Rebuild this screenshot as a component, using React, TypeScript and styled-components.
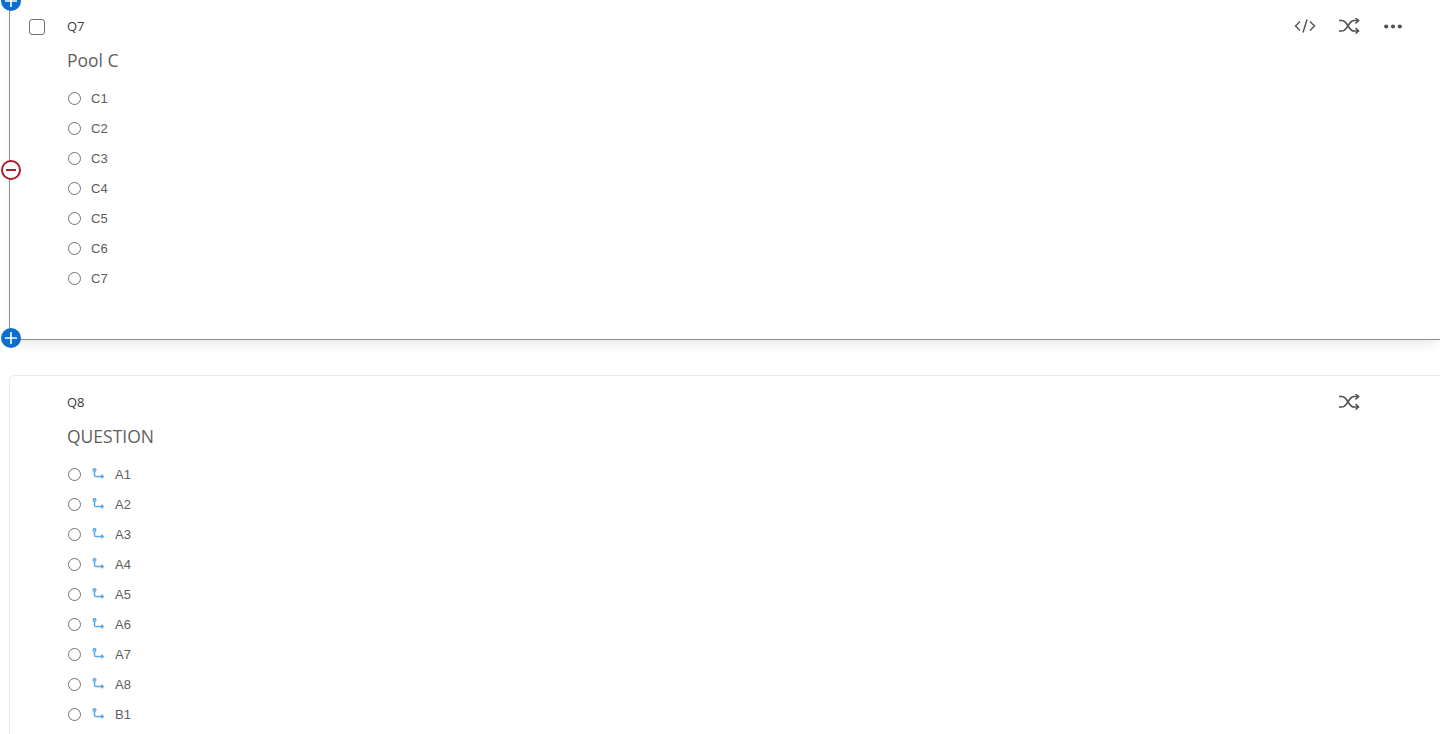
import React from "react";
import styled, { createGlobalStyle } from "styled-components";

const Global = createGlobalStyle`
  html, body { margin: 0; padding: 0; background: #fff; overflow: hidden; height: 734px; }
  body { font-family: "Liberation Sans", Arial, sans-serif; }
`;

const Page = styled.div`
  width: 1440px;
  height: 734px;
  overflow: hidden;
  padding-left: 9px;
  box-sizing: border-box;
  display: flex;
  flex-direction: column;
`;

const SelectedCard = styled.section`
  position: relative;
  height: 340px;
  box-sizing: border-box;
  flex: none;
  border-left: 1px solid #8a8c90;
  border-bottom: 1px solid #8a8c90;
  box-shadow: 0 7px 12px -4px rgba(0, 0, 0, 0.1);
  padding-top: 17px;
`;

const PlainCard = styled.section`
  margin-top: 35px;
  flex: none;
  height: 400px;
  box-sizing: border-box;
  border-left: 1px solid #e8e8e8;
  border-top: 1px solid #e8e8e8;
  border-top-left-radius: 6px;
  padding-top: 17px;
`;

const Header = styled.div`
  height: 20px;
  display: flex;
  align-items: center;
  position: relative;
  padding-left: 57px;
`;

const CheckBox = styled.span`
  position: absolute;
  left: 19px;
  top: 2px;
  width: 16px;
  height: 16px;
  box-sizing: border-box;
  border: 1px solid #6f7278;
  border-radius: 3px;
  background: #fff;
`;

const QLabel = styled.span`
  font-family: "Open Sans", sans-serif;
  font-size: 13px;
  line-height: 20px;
  color: #3a3a3a;
  position: relative;
  top: -1px;
`;

const Tools = styled.div`
  margin-left: auto;
  display: flex;
  align-items: center;
  height: 20px;
`;

const ToolSlot = styled.span<{ $w: number }>`
  width: ${(p) => p.$w}px;
  display: flex;
  justify-content: center;
  color: #525252;
  position: relative;
  top: -1px;
`;

const Title = styled.div`
  font-family: "Open Sans", sans-serif;
  font-size: 17.5px;
  line-height: 24px;
  color: #5f5f5f;
  padding-left: 57px;
  margin-top: 11px;
`;

const Choices = styled.div`
  padding-left: 58px;
  margin-top: 11px;
  display: flex;
  flex-direction: column;
`;

const Choice = styled.div`
  height: 30px;
  display: flex;
  align-items: center;
`;

const Radio = styled.span`
  width: 13px;
  height: 13px;
  box-sizing: border-box;
  border: 1px solid #6f7278;
  border-radius: 50%;
  background: #fff;
  flex: none;
`;

const ChoiceText = styled.span`
  font-size: 13px;
  color: #5c5c5c;
  margin-left: 10px;
`;

const RouteMark = styled.svg`
  margin-left: 11px;
  flex: none;
`;

const Badge = styled.span<{ $top: number; $danger?: boolean }>`
  position: absolute;
  left: -9px;
  top: ${(p) => p.$top}px;
  width: 20px;
  height: 20px;
  border-radius: 50%;
  box-sizing: border-box;
  background: ${(p) => (p.$danger ? "#fff" : "#0b6ed0")};
  border: ${(p) => (p.$danger ? "2px solid #ac1d25" : "none")};
  display: flex;
  align-items: center;
  justify-content: center;
`;

const CodeIcon = () => (
  <svg width="22" height="16" viewBox="0 0 22 16" fill="none" stroke="currentColor" strokeWidth="1.4">
    <path d="M6 3.5 1.5 8 6 12.5M16 3.5 20.5 8 16 12.5M13 1.5 9 14.5" />
  </svg>
);

const ShuffleIcon = () => (
  <svg width="22" height="16" viewBox="0 0 22 16" fill="none" stroke="currentColor" strokeWidth="1.6">
    <path d="M1 2.5h3c2 0 3 1 4.5 3l3 4.5c1.3 2 2.5 3 4.5 3h4.5" />
    <path d="M1 13h3c2 0 3-1 4.5-3l3-4.5c1.3-2 2.5-3 4.5-3h4.5" />
    <path d="M17.5 0 20.5 2.5 17.5 5.5M17.5 10 20.5 13 17.5 15.5" />
  </svg>
);

const DotsIcon = () => (
  <svg width="18" height="5" viewBox="0 0 18 5" fill="#525252">
    <circle cx="2.2" cy="2.5" r="2.1" />
    <circle cx="9" cy="2.5" r="2.1" />
    <circle cx="15.8" cy="2.5" r="2.1" />
  </svg>
);

const RouteIcon = () => (
  <RouteMark width="13" height="12" viewBox="0 0 13 12" fill="none" stroke="#5aa9e6" strokeWidth="1.5">
    <circle cx="2.5" cy="2" r="1.3" />
    <path d="M2.5 4v3.2Q2.5 8.5 4 8.5h7M9.3 6.7 11.2 8.5 9.3 10.3" />
  </RouteMark>
);

const poolC = ["C1", "C2", "C3", "C4", "C5", "C6", "C7"];
const q8 = ["A1", "A2", "A3", "A4", "A5", "A6", "A7", "A8", "B1"];

export default function App() {
  return (
    <Page>
      <Global />
      <SelectedCard>
        <Badge $top={-9}>
          <svg width="12" height="12" viewBox="0 0 12 12" stroke="#fff" strokeWidth="1.6"><path d="M6 0v12M0 6h12" /></svg>
        </Badge>
        <Badge $top={160} $danger>
          <svg width="10" height="4" viewBox="0 0 10 4" stroke="#ac1d25" strokeWidth="2"><path d="M0 2h10" /></svg>
        </Badge>
        <Badge $top={328}>
          <svg width="12" height="12" viewBox="0 0 12 12" stroke="#fff" strokeWidth="1.6"><path d="M6 0v12M0 6h12" /></svg>
        </Badge>
        <Header>
          <CheckBox />
          <QLabel>Q7</QLabel>
          <Tools>
            <ToolSlot $w={44}><CodeIcon /></ToolSlot>
            <ToolSlot $w={44}><ShuffleIcon /></ToolSlot>
            <ToolSlot $w={44}><DotsIcon /></ToolSlot>
            <ToolSlot $w={25} />
          </Tools>
        </Header>
        <Title>Pool C</Title>
        <Choices>
          {poolC.map((c) => (
            <Choice key={c}>
              <Radio />
              <ChoiceText>{c}</ChoiceText>
            </Choice>
          ))}
        </Choices>
      </SelectedCard>
      <PlainCard>
        <Header>
          <QLabel>Q8</QLabel>
          <Tools>
            <ToolSlot $w={44}><ShuffleIcon /></ToolSlot>
            <ToolSlot $w={69} />
          </Tools>
        </Header>
        <Title>QUESTION</Title>
        <Choices>
          {q8.map((c) => (
            <Choice key={c}>
              <Radio />
              <RouteIcon />
              <ChoiceText>{c}</ChoiceText>
            </Choice>
          ))}
        </Choices>
      </PlainCard>
    </Page>
  );
}
